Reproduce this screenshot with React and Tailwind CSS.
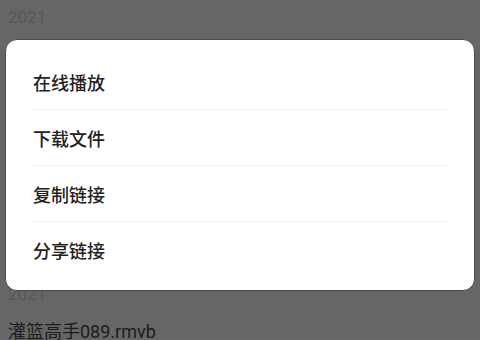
import React from "react";

export default function App() {
  const actions = ["在线播放", "下载文件", "复制链接", "分享链接"];

  return (
    <div
      className="relative w-[480px] h-[340px] overflow-hidden bg-[#666666]"
      style={{ fontFamily: "Roboto, 'Noto Sans CJK SC', sans-serif" }}
    >
      {/* Underlying list (dimmed) */}
      <div className="flex flex-col">
        <div className="h-[35px] px-2 pt-[6px] text-[17px] leading-[22px] text-[#585858]">
          2021
        </div>
        <div className="h-[248px]" />
        <div className="h-[36px] px-2 text-[17px] leading-[22px] text-[#585858]">
          2021
        </div>
        <div className="px-2 text-[18px] leading-[26px] text-[#1c1c1c]">
          灌篮高手089.rmvb
        </div>
      </div>

      {/* Action sheet */}
      <div className="absolute left-[5px] top-[39px] w-[470px] h-[252px] rounded-[12px] border border-[#4a4a4a] bg-white py-[14px]">
        {actions.map((label, idx) => (
          <div key={idx} className="mx-[27px]">
            <div className="flex h-[55px] items-center pt-[3px] text-[18px] font-medium text-[#222222]">
              {label}
            </div>
            {idx < actions.length - 1 && <div className="h-px bg-[#f0f0f0]" />}
          </div>
        ))}
      </div>
    </div>
  );
}
